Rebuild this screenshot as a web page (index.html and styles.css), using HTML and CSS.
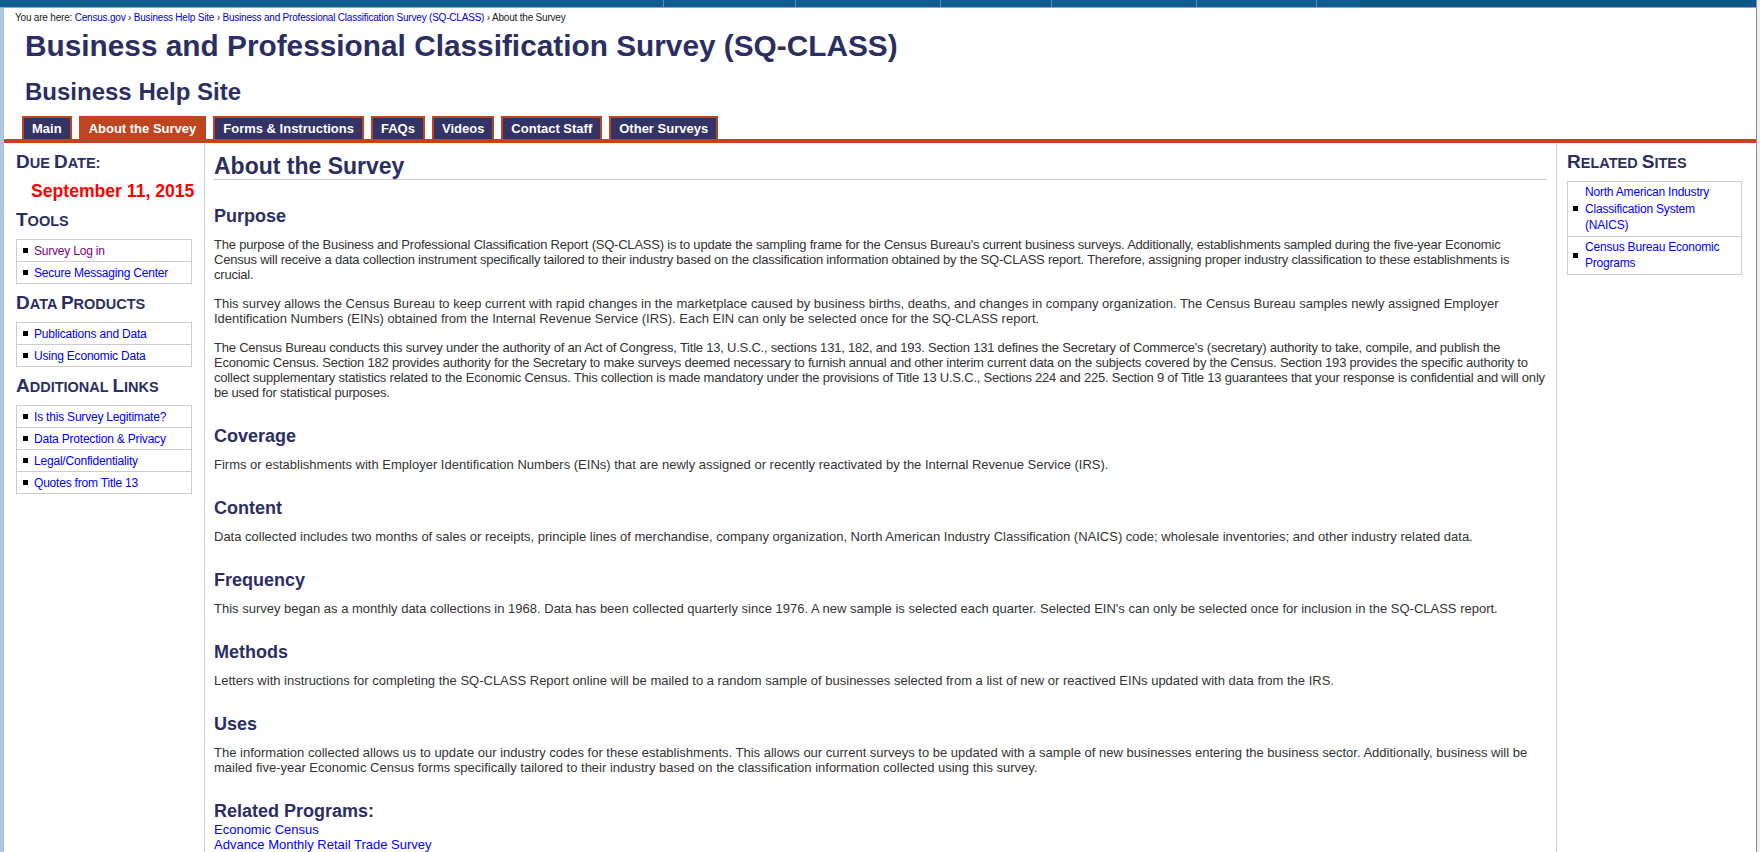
FILE: index.html
```html
<!DOCTYPE html>
<html lang="en">
<head>
  <meta charset="UTF-8">
  <title>About the Survey - Business and Professional Classification Survey (SQ-CLASS)</title>
  <link rel="stylesheet" href="styles.css">
</head>
<body>
  <div class="window">
    <div class="topbar">
      <span style="width:664px"></span><span style="width:132px"></span><span style="width:145px"></span><span style="width:111px"></span><span style="width:145px"></span><span style="width:120px"></span><span class="plain" style="width:43px"></span><span class="dark"></span>
    </div>

    <div class="page">
      <div class="crumbs">
        You are here: <a href="#">Census.gov</a> › <a href="#">Business Help Site</a> › <a href="#">Business and Professional Classification Survey (SQ-CLASS)</a> › About the Survey
      </div>

      <header class="masthead">
        <h1>Business and Professional Classification Survey (SQ-CLASS)</h1>
        <div class="site-name">Business Help Site</div>
      </header>

      <nav class="tabs">
        <a href="#">Main</a>
        <a href="#" class="active">About the Survey</a>
        <a href="#">Forms &amp; Instructions</a>
        <a href="#">FAQs</a>
        <a href="#">Videos</a>
        <a href="#">Contact Staff</a>
        <a href="#">Other Surveys</a>
      </nav>

      <div class="columns">
        <aside class="side side-left">
          <h4><span class="cap">D</span>ue <span class="cap">D</span>ate:</h4>
          <div class="due">September 11, 2015</div>

          <h4><span class="cap">T</span>ools</h4>
          <ul class="links">
            <li><a href="#" class="visited">Survey Log in</a></li>
            <li><a href="#">Secure Messaging Center</a></li>
          </ul>

          <h4><span class="cap">D</span>ata <span class="cap">P</span>roducts</h4>
          <ul class="links">
            <li><a href="#">Publications and Data</a></li>
            <li><a href="#">Using Economic Data</a></li>
          </ul>

          <h4><span class="cap">A</span>dditional <span class="cap">L</span>inks</h4>
          <ul class="links">
            <li><a href="#">Is this Survey Legitimate?</a></li>
            <li><a href="#">Data Protection &amp; Privacy</a></li>
            <li><a href="#">Legal/Confidentiality</a></li>
            <li><a href="#">Quotes from Title 13</a></li>
          </ul>
        </aside>

        <main class="content">
          <h2>About the Survey</h2>

          <h3>Purpose</h3>
          <p class="narrow">The purpose of the Business and Professional Classification Report (SQ-CLASS) is to update the sampling frame for the Census Bureau's current business surveys. Additionally, establishments sampled during the five-year Economic Census will receive a data collection instrument specifically tailored to their industry based on the classification information obtained by the SQ-CLASS report. Therefore, assigning proper industry classification to these establishments is crucial.</p>
          <p>This survey allows the Census Bureau to keep current with rapid changes in the marketplace caused by business births, deaths, and changes in company organization. The Census Bureau samples newly assigned Employer Identification Numbers (EINs) obtained from the Internal Revenue Service (IRS). Each EIN can only be selected once for the SQ-CLASS report.</p>
          <p class="narrow">The Census Bureau conducts this survey under the authority of an Act of Congress, Title 13, U.S.C., sections 131, 182, and 193. Section 131 defines the Secretary of Commerce's (secretary) authority to take, compile, and publish the Economic Census. Section 182 provides authority for the Secretary to make surveys deemed necessary to furnish annual and other interim current data on the subjects covered by the Census. Section 193 provides the specific authority to collect supplementary statistics related to the Economic Census. This collection is made mandatory under the provisions of Title 13 U.S.C., Sections 224 and 225. Section 9 of Title 13 guarantees that your response is confidential and will only be used for statistical purposes.</p>

          <h3>Coverage</h3>
          <p>Firms or establishments with Employer Identification Numbers (EINs) that are newly assigned or recently reactivated by the Internal Revenue Service (IRS).</p>

          <h3>Content</h3>
          <p>Data collected includes two months of sales or receipts, principle lines of merchandise, company organization, North American Industry Classification (NAICS) code; wholesale inventories; and other industry related data.</p>

          <h3>Frequency</h3>
          <p>This survey began as a monthly data collections in 1968. Data has been collected quarterly since 1976. A new sample is selected each quarter. Selected EIN's can only be selected once for inclusion in the SQ-CLASS report.</p>

          <h3>Methods</h3>
          <p>Letters with instructions for completing the SQ-CLASS Report online will be mailed to a random sample of businesses selected from a list of new or reactived EINs updated with data from the IRS.</p>

          <h3>Uses</h3>
          <p>The information collected allows us to update our industry codes for these establishments. This allows our current surveys to be updated with a sample of new businesses entering the business sector. Additionally, business will be mailed five-year Economic Census forms specifically tailored to their industry based on the classification information collected using this survey.</p>

          <h3 class="tight">Related Programs:</h3>
          <div class="programs">
            <a href="#">Economic Census</a>
            <a href="#">Advance Monthly Retail Trade Survey</a>
          </div>
        </main>

        <aside class="side side-right">
          <h4><span class="cap">R</span>elated <span class="cap">S</span>ites</h4>
          <ul class="links">
            <li><a href="#">North American Industry Classification System (NAICS)</a></li>
            <li><a href="#">Census Bureau Economic Programs</a></li>
          </ul>
        </aside>
      </div>
    </div>
  </div>
  <div class="scroll"></div>
</body>
</html>
```

FILE: styles.css
```css
/* base */
* { box-sizing: border-box; }
html, body { margin:0; height:100%; overflow:hidden; }
body { display:flex; font-family:"Liberation Sans", Arial, sans-serif; color:#333; background:#fff; }
a { text-decoration:none; color:#0000ff; }

/* browser frame bits */
.window { flex:1; display:flex; flex-direction:column; min-width:0; }
.scroll { width:4px; border-left:1px solid #8f8f8f; background:#ececec; }
.topbar { display:flex; height:8px; background:#0f5e92; border-bottom:1px solid #a3a3a3; flex:none; }
.topbar span { border-right:1px solid #5a90ba; }
.topbar .plain { border:0; }
.topbar .dark { flex:1; background:#0c5688; border:0; }
.page { flex:1; display:flex; flex-direction:column; border-left:4px solid #adc5e1; min-height:0; }

/* header */
.crumbs { padding:4px 11px 0; font-size:10px; line-height:12px; letter-spacing:-0.2px; color:#222; }
.crumbs a { color:#0000cc; }
.masthead { padding:5px 0 0 21px; color:#2b2e63; }
.masthead h1 { margin:0; font-size:29.8px; line-height:34px; }
.site-name { margin-top:15px; font-size:24px; font-weight:bold; line-height:28px; }

/* tabs */
.tabs { display:flex; gap:7px; padding:10px 0 0 18px; border-bottom:4px solid #bf4520; }
.tabs a {
  padding:3px 8px 3px; border:2px solid #bf4520; border-bottom:0;
  background:#333366; color:#fff; font-size:13px; font-weight:bold; line-height:15px;
}
.tabs a.active { background:#bf4520; }

/* columns */
.columns { flex:1; display:grid; grid-template-columns:201px 1fr 200px; min-height:0; }
.side h4 { margin:10px 0 7px; font-size:14.5px; line-height:21px; text-transform:uppercase; color:#2b2e63; }
.side h4 .cap { font-size:19px; line-height:0; }
.side-left { padding:0 12px; border-right:1px solid #ccc; }
.side-right { padding:0 14px 0 10px; border-left:1px solid #ccc; }
.due { margin:5.5px 0 0 15px; font-size:17.6px; line-height:20px; font-weight:bold; color:#ff0000; white-space:nowrap; }

.links { margin:0; padding:0; list-style:none; border:1px solid #ccc; font-size:12px; letter-spacing:-0.2px; }
.links li { display:flex; align-items:center; gap:6px; padding:2.5px 0 2.5px 6px; line-height:16px; }
.links li + li { border-top:1px solid #ccc; }
.links li::before { content:""; flex:none; width:5px; height:5px; background:#000; }
.links a.visited { color:#800080; }
.side-right .links li { gap:7px; padding:2px 4px 2px 5px; line-height:16.5px; }

/* main text */
.content { padding:10px 10px 0 9px; font-size:13px; }
.content h2 { margin:0; font-size:23px; line-height:26px; color:#2b2e63; border-bottom:1px solid #c8c8c8; }
.content h3 { margin:26px 0 10px; font-size:18px; line-height:21px; color:#2b2e63; }
.content h3.tight { margin-bottom:0; }
.content p { margin:0 0 14px; line-height:15px; }
.content p.narrow { letter-spacing:-0.22px; }
.programs a { display:block; line-height:15px; }
```
